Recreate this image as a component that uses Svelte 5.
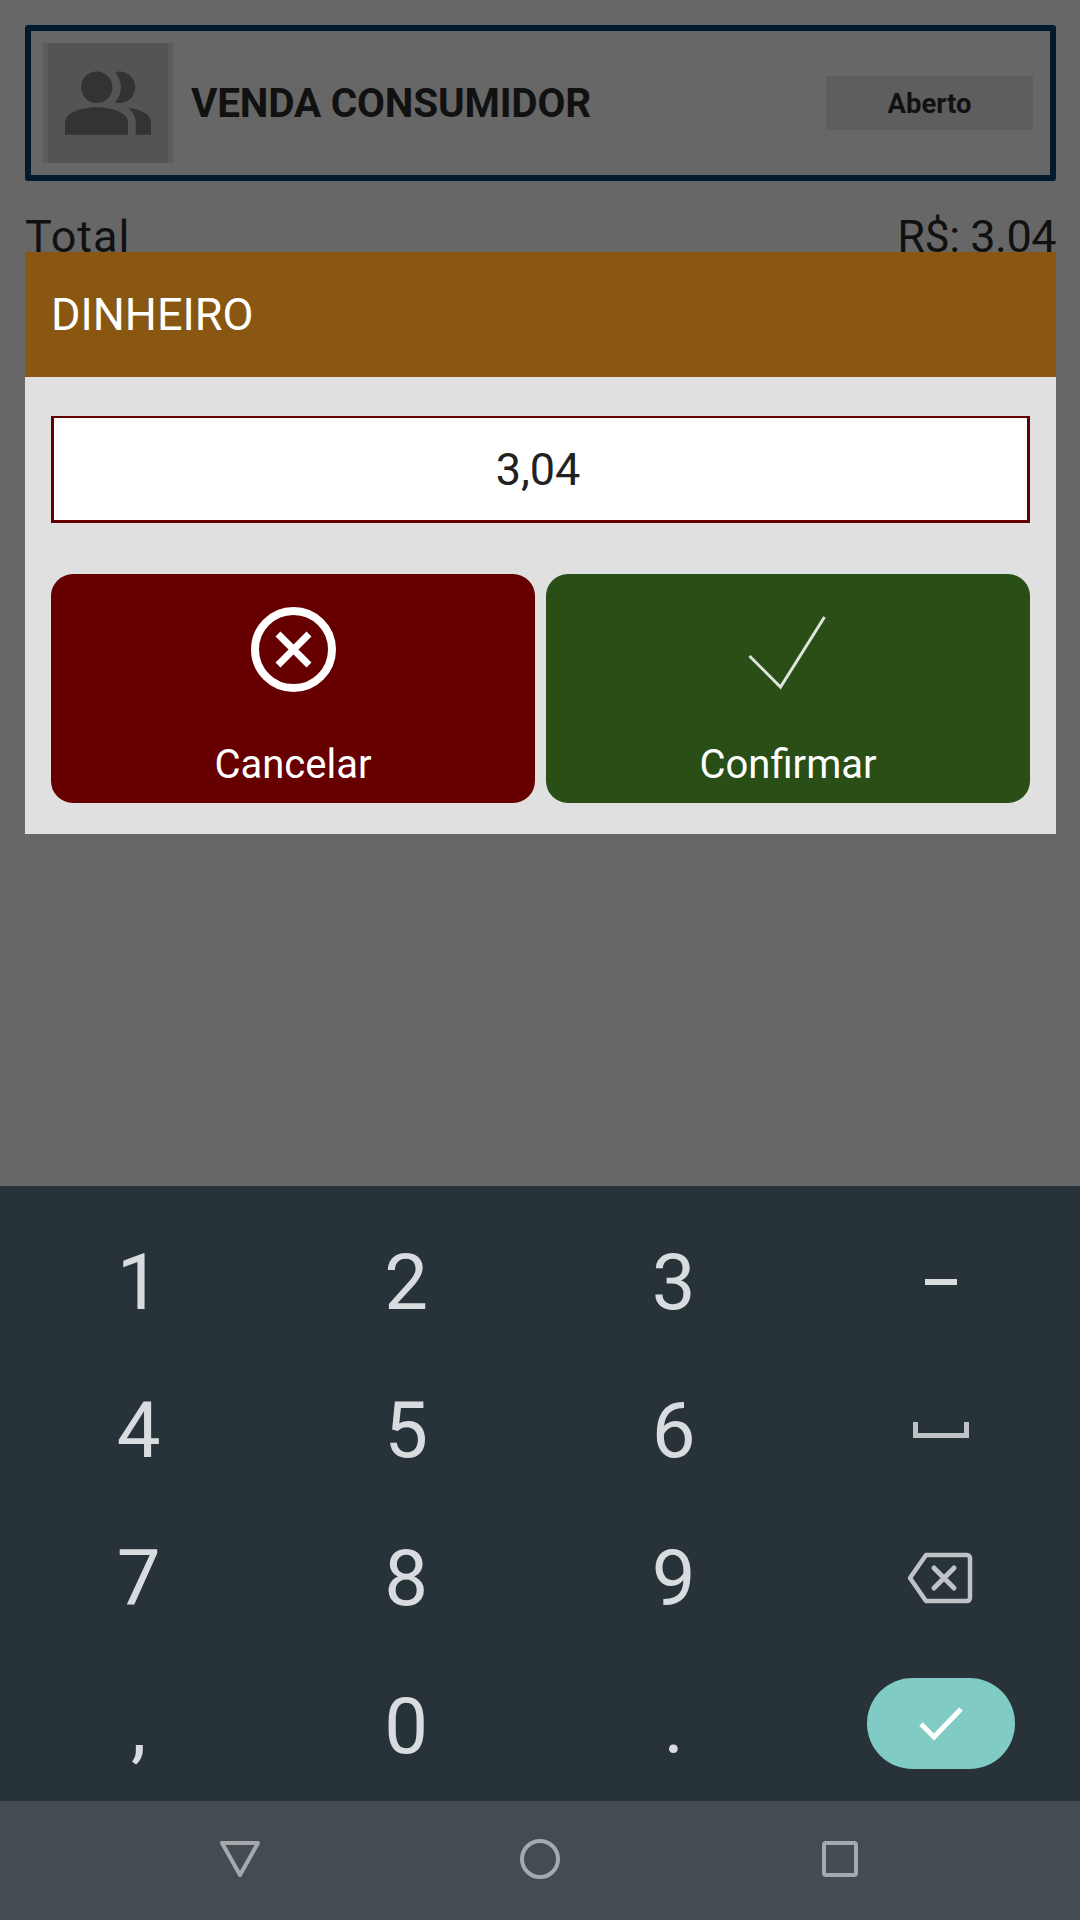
<script lang="ts">
const rows = [
  ['1', '2', '3', '-'],
  ['4', '5', '6', 'space'],
  ['7', '8', '9', 'back'],
  [',', '0', '.', 'enter'],
]
</script>

<div class="screen">
  <main class="page">
    <section class="client">
      <div class="avatar">
        <svg class="avatar-icon" viewBox="48 43 120 120" aria-hidden="true">
          <circle cx="96.7" cy="87.3" r="15.7" />
          <path d="M65 134.7V122C65 112 84 107.3 96.5 107.3S128 112 128 122V134.7Z" />
          <path d="M115 72.3A15.7 15.7 0 1 1 115 102.3A22 22 0 0 0 115 72.3Z" />
          <path d="M127.7 107.7C140 109 151 114 151 122V134.7H135.7V122C135.7 116 132 111 127.7 107.7Z" />
        </svg>
      </div>
      <h1>VENDA CONSUMIDOR</h1>
      <span class="status">Aberto</span>
    </section>

    <div class="total">
      <span class="total-label">Total</span>
      <span class="total-value">R$: 3.04</span>
    </div>

    <div class="dialog">
      <header>DINHEIRO</header>
      <div class="dialog-body">
        <div class="field">3,04</div>
        <div class="actions">
          <button class="cancel">
            <svg viewBox="0 0 85 85" width="85" height="85" aria-hidden="true">
              <circle cx="42.5" cy="42.5" r="38.5" fill="none" stroke="#fff" stroke-width="8" />
              <path d="M27 27L58 58M58 27L27 58" fill="none" stroke="#fff" stroke-width="7" />
            </svg>
            <span>Cancelar</span>
          </button>
          <button class="confirm">
            <svg viewBox="0 0 85 85" width="85" height="85" aria-hidden="true">
              <path d="M3.5 49L34.5 80L78.5 10" fill="none" stroke="#dfe3dc" stroke-width="3" />
            </svg>
            <span>Confirmar</span>
          </button>
        </div>
      </div>
    </div>
  </main>

  <div class="keyboard">
    {#each rows as row}
      {#each row as key}
        <div class="key">
          {#if key === 'space'}
            <svg width="56" height="16" viewBox="0 0 56 16" aria-hidden="true">
              <path d="M2.5 0V13.5H53.5V0" fill="none" stroke="#bfc3c6" stroke-width="5" />
            </svg>
          {:else if key === 'back'}
            <svg class="back" width="66" height="52" viewBox="0 0 66 52" aria-hidden="true">
              <path d="M19 3H60A3 3 0 0 1 63 6V46A3 3 0 0 1 60 49H19L3 26Z" fill="none" stroke="#bfc3c6" stroke-width="4.5" stroke-linejoin="round" />
              <path d="M27 16L47 36M47 16L27 36" fill="none" stroke="#bfc3c6" stroke-width="5" stroke-linecap="round" />
            </svg>
          {:else if key === 'enter'}
            <div class="enter">
              <svg width="46" height="36" viewBox="0 0 46 36" aria-hidden="true">
                <path d="M3 19L16 32L43 4" fill="none" stroke="#fff" stroke-width="5" />
              </svg>
            </div>
          {:else if key === '-'}
            <span class="dash"></span>
          {:else}
            {key}
          {/if}
        </div>
      {/each}
    {/each}
  </div>

  <nav class="navbar">
    <div class="nav-item">
      <svg width="40" height="36" viewBox="0 0 40 36" aria-hidden="true">
        <path d="M2 2H38L20 34Z" fill="none" stroke="#a5a9ac" stroke-width="4" stroke-linejoin="round" />
      </svg>
    </div>
    <div class="nav-item">
      <svg width="40" height="40" viewBox="0 0 40 40" aria-hidden="true">
        <circle cx="20" cy="20" r="18" fill="none" stroke="#a5a9ac" stroke-width="4" />
      </svg>
    </div>
    <div class="nav-item">
      <svg width="36" height="36" viewBox="0 0 36 36" aria-hidden="true">
        <rect x="2" y="2" width="32" height="32" rx="2" fill="none" stroke="#a5a9ac" stroke-width="4" />
      </svg>
    </div>
  </nav>
</div>

<style>
  :global(body) {
    margin: 0;
    background: #676767;
  }

  .screen {
    width: 1080px;
    height: 1920px;
    display: flex;
    flex-direction: column;
    overflow: hidden;
    font-family: Roboto, sans-serif;
    background: #676767;
  }

  .page {
    position: relative;
    flex: 1;
    padding: 25px 24px 0 25px;
  }

  .client {
    display: flex;
    align-items: center;
    height: 156px;
    box-sizing: border-box;
    border: 6px solid #011a2e;
    border-radius: 3px;
    padding: 0 17px 0 12px;
  }

  .avatar {
    width: 120px;
    height: 120px;
    background: #545454;
    border-left: 5px solid #5b5b5b;
    border-right: 5px solid #5b5b5b;
  }

  .avatar-icon {
    display: block;
    width: 120px;
    height: 120px;
    fill: #333;
  }

  h1 {
    flex: 1;
    margin: 0 0 0 18px;
    font-size: 40.5px;
    font-weight: 700;
    color: #111;
    letter-spacing: -0.2px;
  }

  .status {
    width: 207px;
    height: 54px;
    display: flex;
    align-items: center;
    justify-content: center;
    background: #5e5e5e;
    color: #111;
    font-size: 27.5px;
    font-weight: 700;
  }

  .total {
    display: flex;
    justify-content: space-between;
    margin-top: 29px;
    font-size: 45px;
    color: #111;
  }

  .total-label {
    letter-spacing: 1px;
  }

  .total-value {
    letter-spacing: -0.5px;
  }

  .dialog {
    position: absolute;
    top: 252px;
    left: 25px;
    width: 1031px;
    background: #e0e0e0;
  }

  .dialog header {
    height: 125px;
    display: flex;
    align-items: center;
    padding-left: 26px;
    background: #8a5713;
    color: #fff;
    font-size: 45px;
  }

  .dialog-body {
    padding: 39px 26px 31px;
  }

  .field {
    height: 107px;
    box-sizing: border-box;
    display: flex;
    align-items: center;
    justify-content: center;
    padding-right: 5px;
    background: #fff;
    border: solid #660000;
    border-width: 2px 3px 3px;
    color: #222;
    font-size: 45px;
  }

  .actions {
    display: grid;
    grid-template-columns: 1fr 1fr;
    gap: 11px;
    margin-top: 51px;
  }

  .actions button {
    height: 229px;
    display: flex;
    flex-direction: column;
    align-items: center;
    border: 0;
    padding: 33px 0 0;
    border-radius: 22px;
    color: #fff;
    font-family: inherit;
    font-size: 40px;
  }

  .actions svg {
    display: block;
    margin-bottom: 49px;
  }

  .cancel {
    background: #660000;
  }

  .confirm {
    background: #2a4f16;
  }

  .keyboard {
    height: 615px;
    box-sizing: border-box;
    padding: 22px 5px 0;
    display: grid;
    grid-template-columns: repeat(4, 1fr);
    grid-auto-rows: 148px;
    background: #283239;
    color: #d9dcde;
    font-size: 78px;
  }

  .key {
    display: flex;
    align-items: center;
    justify-content: center;
  }

  .dash {
    width: 32px;
    height: 6px;
    background: #d9dcde;
  }

  .back {
    margin-right: 3px;
  }

  .enter {
    width: 148px;
    height: 91px;
    margin-bottom: 6px;
    display: flex;
    align-items: center;
    justify-content: center;
    border-radius: 46px;
    background: #80cbc4;
  }

  .navbar {
    height: 119px;
    box-sizing: border-box;
    padding: 0 90px 4px;
    display: grid;
    grid-template-columns: repeat(3, 1fr);
    background: #444c53;
  }

  .nav-item {
    display: flex;
    align-items: center;
    justify-content: center;
  }
</style>
